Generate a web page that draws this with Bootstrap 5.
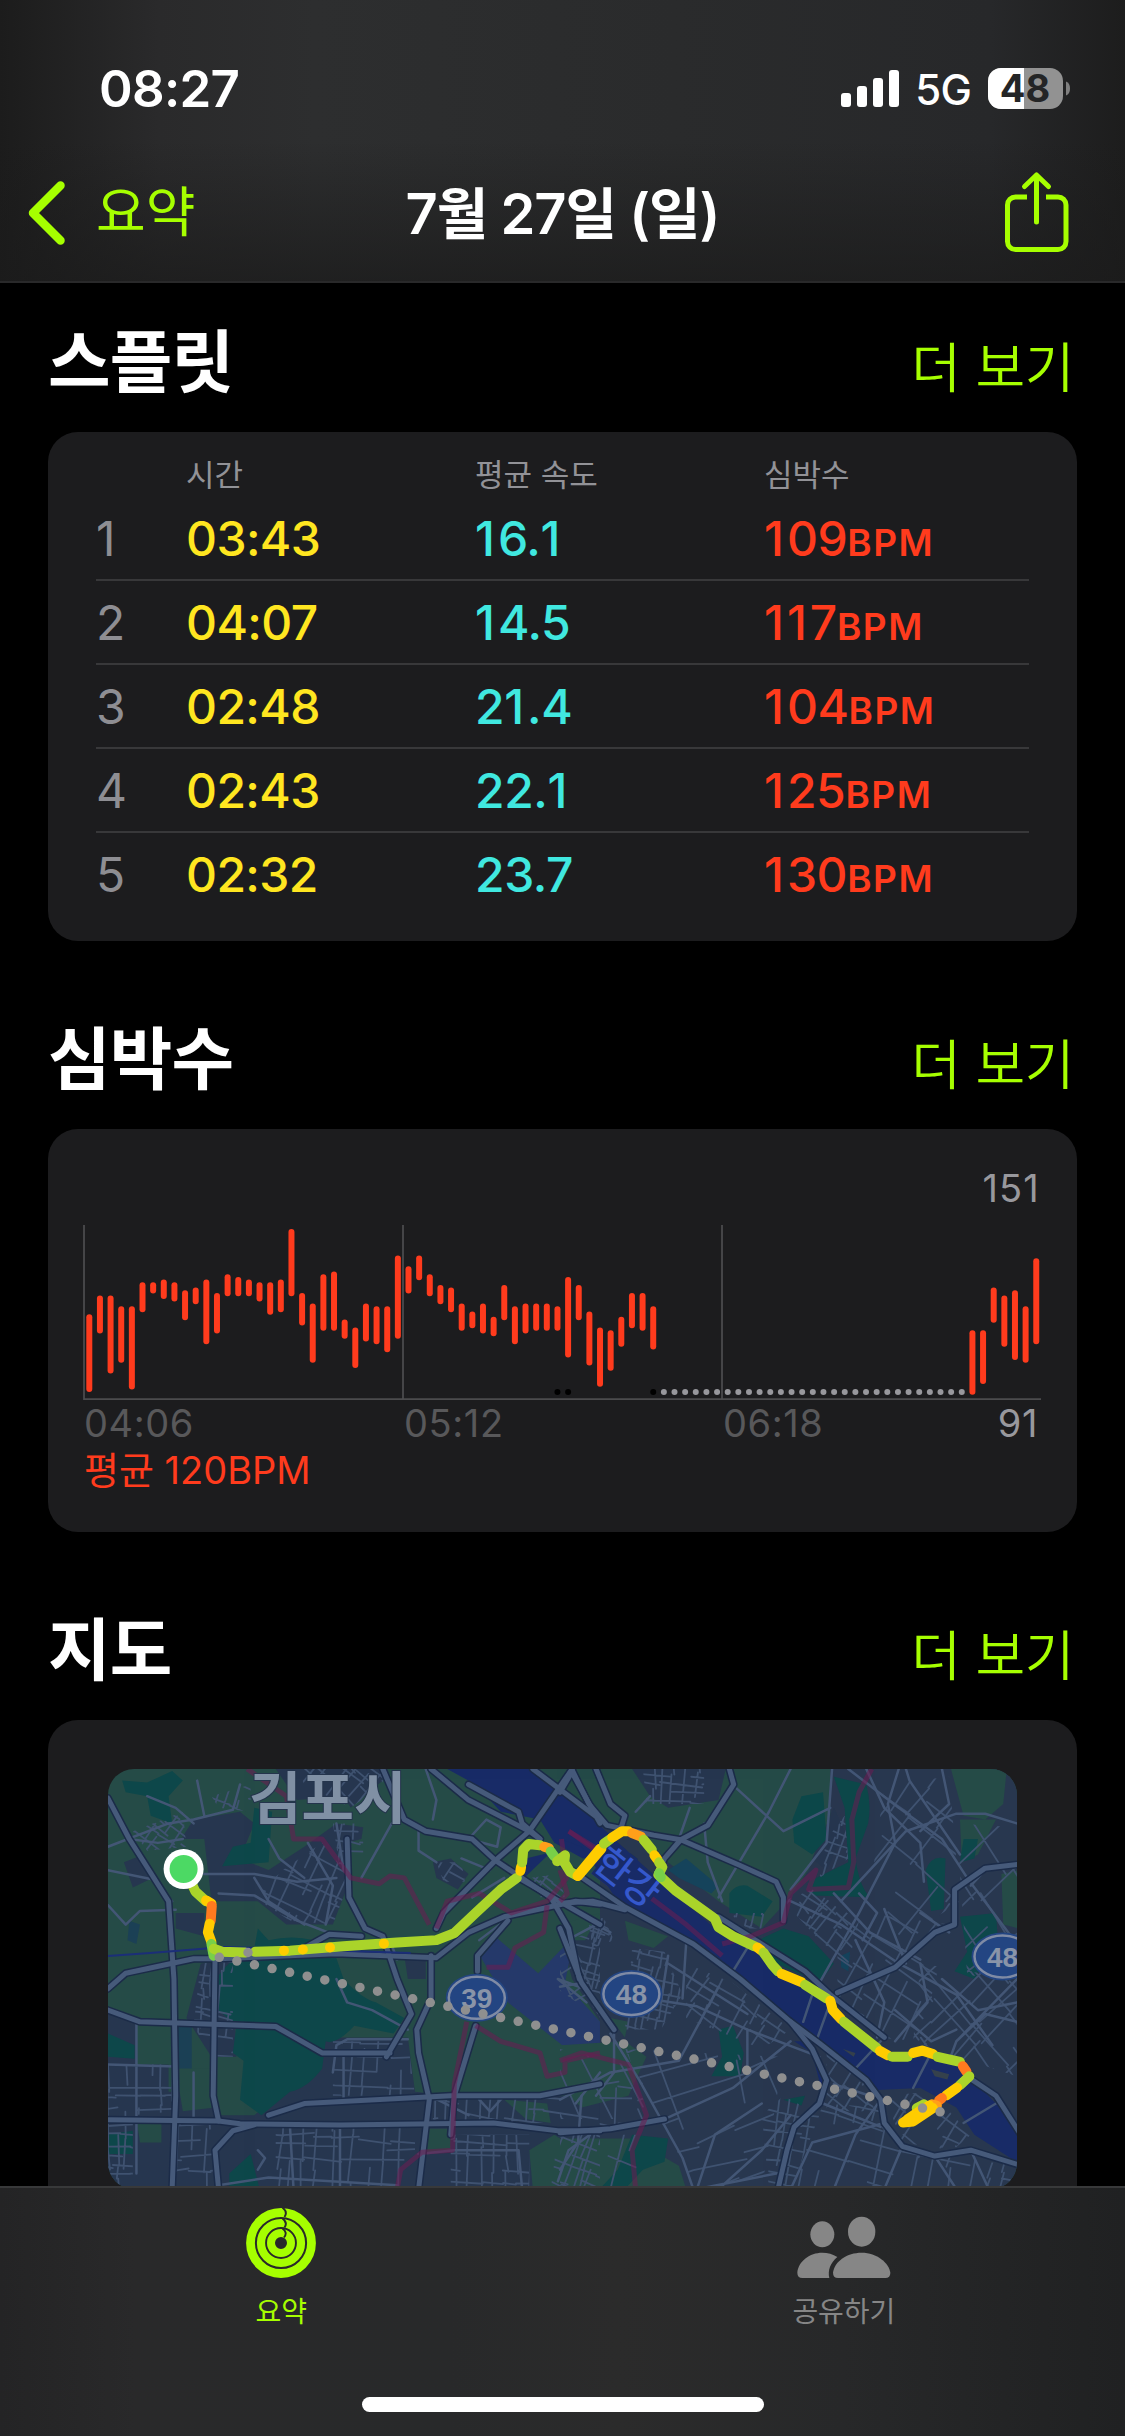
<!DOCTYPE html>
<html lang="ko">
<head>
  <meta charset="UTF-8">
  <title>7월 27일 (일)</title>
  <link href="https://cdn.jsdelivr.net/npm/bootstrap@5.3.0/dist/css/bootstrap.min.css" rel="stylesheet">

  <style>
    body {
      width: 1125px;
      height: 2436px;
      overflow: hidden;
      background: #000;
      color: #fff;
      font-family: Inter, "Noto Sans CJK KR", sans-serif;
    }

    .top-bar {
      height: 283px;
      padding-top: 59px;
      border-bottom: 2px solid #29292a;
      background:
        linear-gradient(180deg, transparent 50%, rgba(27, 27, 27, .75) 100%),
        linear-gradient(90deg, #1c1c1c 0, #2a2a2b 14%, #2d2e2f 28%, #2a2b2c 60%, #27282a 88%, #1d1d1d 100%);
    }
    .status-row { height: 60px; padding: 0 54px 0 99px; }
    .clock { font-size: 51px; font-weight: 600; letter-spacing: -.7px; line-height: 60px; }
    .network { font-size: 42px; font-weight: 500; line-height: 60px; margin: 0 17px 0 16px; letter-spacing: -.8px; padding-top: 2px; }
    .nav-row { height: 140px; margin-top: 24px; padding: 0 54px 0 26px; }
    .nav-side { width: 300px; }
    .nav-side.back { width: 328px; }
    .nav-row a, .more-link { color: #a6ff00; text-decoration: none; }
    .back-label { font-size: 54px; line-height: 70px; margin-left: 28px; font-weight: 400; }
    .page-title { font-size: 56px; font-weight: 600; line-height: 80px; letter-spacing: -1px; padding-top: 2px; }

    main { height: 1903px; overflow: hidden; padding: 0 48px; }
    .section-head { height: 188px; padding-bottom: 30px; }
    .section-head.first { height: 149px; }
    .section-head h2 { font-size: 68px; font-weight: 700; line-height: 80px; letter-spacing: -.8px; }
    .more-link { font-size: 54px; font-weight: 350; line-height: 60px; margin: 0 3px 3px 0; letter-spacing: -.4px; }
    .panel { background: #1c1c1e; border-radius: 30px; }

    .splits { height: 509px; padding: 0 48px; }
    .split-row { display: grid; grid-template-columns: 90px 289px 289px 1fr; }
    .split-labels { height: 65px; padding-top: 21px; font-size: 31px; line-height: 44px; color: #929297; font-weight: 400; }
    .split-item { height: 84px; line-height: 84px; font-size: 48px; font-weight: 500; letter-spacing: -.4px; border-bottom: 2px solid #38383a; }
    .split-item:last-child { border-bottom: 0; }
    .split-no { color: #8e8e93; font-weight: 400; }
    .split-time { color: #ffe620; letter-spacing: -.6px; }
    .split-speed { color: #40e8e0; }
    .one-digit { letter-spacing: 3px; }
    .bpm-text { color: #ff3b1d; }
    .bpm-unit { font-size: 37px; font-weight: 600; letter-spacing: 1.5px; }

    .pulse { height: 403px; padding: 36px 36px 0; font-size: 38px; }
    .pulse svg { overflow: visible; }
    .pulse-max { line-height: 46px; color: #98989d; padding-right: 1px; letter-spacing: 1.2px; }
    .pulse-axis { display: grid; grid-template-columns: 320px 319px 1fr auto; line-height: 44px; color: #58585a; padding-right: 3px; letter-spacing: .6px; }
    .pulse-low { color: #98989d; }
    .pulse-avg { line-height: 50px; }

    .map-panel { padding: 49px 60px 40px; border-radius: 30px 30px 0 0; }
    .route-map { width: 909px; height: 420px; border-radius: 26px; overflow: hidden; }
    .route-map path { vector-effect: non-scaling-stroke; fill: none; stroke-linejoin: round; stroke-linecap: round; }
    .route-map .area path { stroke: none; }
    .route-map .casing path { stroke: #1b2b48; stroke-width: 8; }
    .route-map .road path { stroke: #465a7a; stroke-width: 5; }
    .route-map .block path { stroke: #3f5270; stroke-width: 1.8; }
    .route-map .street path { stroke: #435675; stroke-width: 2.5; }
    .route-map .border-line path { stroke: #6b1d52; stroke-width: 5; opacity: .55; stroke-linecap: butt; }
    .route-map .track path { stroke-width: 10; }

    .tab-bar {
      height: 250px;
      border-top: 2px solid #38393a;
      background: linear-gradient(90deg, #242425 0, #29292a 12%, #28292a 40%, #2b2b2b 55%, #272829 75%, #202122 100%);
    }
    .tab-item { width: 50%; padding-top: 20px; font-size: 28px; line-height: 36px; letter-spacing: -.1px; color: #868686; }
    .tab-item.active { color: #a6ff00; }
    .tab-item svg { margin-bottom: 16px; }
    .home-indicator { width: 402px; height: 15px; border-radius: 8px; background: #fff; margin: 67px auto 0; }
  </style>
</head>
<body>

  <header class="top-bar">
    <div class="status-row d-flex align-items-center">
      <span class="clock me-auto">08:27</span>
      <svg width="58" height="60" viewBox="0 0 58 60" fill="#fff">
        <rect x="0" y="34" width="10" height="14" rx="3"/>
        <rect x="16" y="27" width="10" height="21" rx="3"/>
        <rect x="32" y="19" width="10" height="29" rx="3"/>
        <rect x="48" y="11" width="10" height="37" rx="3"/>
      </svg>
      <span class="network">5G</span>
      <svg width="83" height="60" viewBox="0 0 83 60">
        <rect x="0" y="9" width="75" height="41" rx="13" fill="#929292"/>
        <path d="M13 9H36V50H13A13 13 0 0 1 0 37V22A13 13 0 0 1 13 9Z" fill="#fff"/>
        <path d="M78 22.5Q82 24 82 29.5T78 36.500Z" fill="#808080"/>
        <text x="37" y="43" text-anchor="middle" font-size="38" font-weight="700" fill="#242526">48</text>
      </svg>
    </div>
    <nav class="nav-row d-flex align-items-center justify-content-between">
      <a href="#" class="nav-side back d-flex align-items-center">
        <svg width="42" height="70" viewBox="0 0 42 70" fill="none" stroke="#a6ff00" stroke-width="8.500" stroke-linecap="round" stroke-linejoin="round">
          <path d="M34.500 7.500L7 35L34.500 62.500"/>
        </svg>
        <span class="back-label">요약</span>
      </a>
      <span class="page-title text-nowrap">7월 27일 (일)</span>
      <a href="#" class="nav-side d-flex justify-content-end">
        <svg width="69" height="84" viewBox="0 0 69 84" fill="none" stroke="#a6ff00" stroke-width="5" stroke-linecap="round" stroke-linejoin="round">
          <path d="M25 26H13.500a8 8 0 0 0-8 8V70.500a8 8 0 0 0 8 8H56a8 8 0 0 0 8-8V34a8 8 0 0 0-8-8H44" stroke-linecap="butt"/>
          <path d="M34.500 51V4M22.500 15.500L34.500 4L46.500 15.500"/>
        </svg>
      </a>
    </nav>
  </header>

  <main>
    <!-- Splits -->
    <div class="section-head first d-flex justify-content-between align-items-end">
      <h2 class="m-0">스플릿</h2>
      <a href="#" class="more-link">더 보기</a>
    </div>
    <section class="panel splits">
      <div class="split-row split-labels">
        <span></span><span>시간</span><span>평균 속도</span><span>심박수</span>
      </div>
      <div id="split-list"></div>
    </section>

    <!-- Heart rate -->
    <div class="section-head d-flex justify-content-between align-items-end">
      <h2 class="m-0">심박수</h2>
      <a href="#" class="more-link">더 보기</a>
    </div>
    <section class="panel pulse">
      <div class="pulse-max text-end">151</div>
      <svg id="pulse-chart" class="d-block" width="957" height="190" viewBox="0 0 957 190">
        <path d="M0 14V189M319 14V189M638 14V189M-.8 188.200H957" stroke="#4b4b4d" stroke-width="1.800" fill="none"/>
      </svg>
      <div class="pulse-axis">
        <span>04:06</span><span>05:12</span><span>06:18</span><span class="pulse-low">91</span>
      </div>
      <div class="pulse-avg bpm-text">평균 120BPM</div>
    </section>

    <!-- Map -->
    <div class="section-head d-flex justify-content-between align-items-end">
      <h2 class="m-0">지도</h2>
      <a href="#" class="more-link">더 보기</a>
    </div>
    <section class="panel map-panel">
      <svg id="route-map" class="route-map d-block" viewBox="108 1769 909 420">
        <rect x="108" y="1769" width="909" height="420" fill="#254b47"/>
        <rect x="600" y="1769" width="417" height="420" fill="#28374f"/>
      </svg>
    </section>
  </main>

  <footer class="tab-bar">
    <div class="d-flex">
      <div class="tab-item active d-flex flex-column align-items-center">
        <svg width="70" height="70" viewBox="-35 -35 70 70" fill="none" stroke="#a6ff00">
          <circle r="30.500" stroke-width="8.800"/>
          <circle r="20" stroke-width="8.200"/>
          <circle r="10" stroke-width="8"/>
          <path d="M1.500 -35.500Q7 -31 3.500 -26M1.500 -24.500Q7 -20.500 3.500 -15.500M1.500 -14.500Q7 -10.500 3 -5.500" stroke="#29292a" stroke-width="1.900"/>
        </svg>
        <span>요약</span>
      </div>
      <div class="tab-item d-flex flex-column align-items-center">
        <svg width="94" height="70" viewBox="80 25 282 210" fill="#868686">
          <ellipse cx="156" cy="104" rx="36" ry="39"/>
          <ellipse cx="274" cy="96" rx="41" ry="45"/>
          <path d="M203 235Q188 235 188 219C192 185 230 159 274 159C320 159 356 190 360 219Q360 235 345 235Z"/>
          <path d="M96 235Q81 235 81 219C84 185 118 159 156 159C172 159 188 163 201 172C180 190 172 212 177 235Z"/>
        </svg>
        <span>공유하기</span>
      </div>
    </div>
    <div class="home-indicator"></div>
  </footer>

  <script>
    // Splits table
    const splits = [
      ['03:43', '16.1', 109],
      ['04:07', '14.5', 117],
      ['02:48', '21.4', 104],
      ['02:43', '22.1', 125],
      ['02:32', '23.7', 130]
    ];
    // Inter sets its 1 tight, so it gets a little more room
    const widenOnes = n => String(n).replace(/1/g, '<span class="one-digit">1</span>');
    document.getElementById('split-list').innerHTML = splits.map((s, i) => `
      <div class="split-row split-item">
        <span class="split-no">${i + 1}</span>
        <span class="split-time">${s[0]}</span>
        <span class="split-speed">${widenOnes(s[1])}</span>
        <span class="bpm-text">${widenOnes(s[2])}<span class="bpm-unit">BPM</span></span>
      </div>`).join('');

    // Heart rate ranges [high, low], one slot each
    const ranges = [
      [119,92],[126,114],[126,99],[122,103],[122,93],[131,122],[131,129],[132,127],[131,126],[128,119],
      [129,125],[132,110],[127,114],[134,128],[133,128],[132,128],[131,126],[131,121],[132,122],[151,128],
      [127,117],[123,103],[134,115],[135,115],[117,112],[114,101],[123,111],[122,110],[122,107],[141,112],
      [137,129],[141,134],[134,128],[130,125],[129,122],[123,115],[120,116],[123,114],[118,113],[130,119],
      [122,110],[123,114],[123,115],[123,115],[122,115],[133,105],[130,119],[120,102],[114,94],[113,100],
      [118,109],[127,116],[127,115],[122,108]
    ];
    const tail = [[113,91],[113,95],[129,118],[126,109],[128,104],[122,103],[140,110]];
    const slotX = i => 5.3 + 10.64 * i;
    const bpmY = b => 18 + (151 - b) * 2.662;
    const bar = (r, i) => `<rect x="${slotX(i) - 3}" y="${bpmY(r[0])}" width="6" height="${bpmY(r[1]) - bpmY(r[0]) + 6}" rx="3" fill="#ff3b1d"/>`;
    const dot = (i, color) => `<circle cx="${slotX(i)}" cy="181" r="3" fill="${color}"/>`;
    let chart = ranges.map(bar).join('') + tail.map((r, i) => bar(r, i + 83)).join('');
    [44, 45, 53].forEach(i => { chart += dot(i, '#000'); });
    for (let i = 54; i < 83; i++) chart += dot(i, '#98989d');
    document.getElementById('pulse-chart').innerHTML += chart;

    // Map: west and east tiles have their own grids
    const west = 'translate(40 1590) scale(.35714 .38903)';
    const east = 'translate(560 1590) scale(.36033 .38903)';
    const urban = '#26364f', green = '#254b47', forest = '#0d474a', water = '#182b67';

    const areas = {
      west: [
        [urban, 'M395 640L430 590L560 570L600 600L560 690L640 720L740 660L830 600L905 610L900 640L860 650L870 740L820 860L690 860L610 800L480 800L460 640Z'],
        [urban, 'M660 460H960V490L870 560L850 530L720 540Z'],
        [urban, 'M235 700L290 680L315 740L260 765ZM380 830H460V890L380 870ZM190 1075L270 1110V1230H190Z'],
        [urban, 'M190 1220H360V1290H490L500 1350H600L740 1240L800 1150H1030L1050 1290L1155 1300H1568V1540H190Z'],
        [urban, 'M1460 900L1568 860V1110L1490 1000ZM1100 700L1150 690L1200 730L1170 770L1110 740ZM450 960L540 950L550 1200H480L410 1100ZM1020 940H1080V1000H1030Z'],
        [forest, 'M230 490L300 495L370 465L400 490L360 530L370 600L310 580L300 530L240 520ZM600 560L650 570L640 700L510 710L540 660L590 650Z'],
        [forest, 'M500 990Q540 940 600 920L610 870L640 900Q740 880 820 920L850 1000Q900 1050 940 1060L1020 1100L990 1140L880 1120Q830 1170 800 1160L790 1230Q750 1280 700 1290L620 1350L560 1310L570 1210L540 1190L550 1120L500 1080Z'],
        [forest, 'M530 1500L590 1450L615 1540H530ZM190 1140L265 1170V1205L190 1200ZM190 1400L260 1390V1450H190Z'],
        [green, 'M380 1230H490V1330L400 1340ZM1370 1440L1440 1400L1490 1430L1450 1540H1380ZM1070 1385H1150V1440L1080 1450ZM270 1360H340V1420H280ZM1300 1310L1420 1320L1430 1370L1360 1360Z'],
        ['#25396a', 'M1280 895L1395 985L1495 890L1470 1010L1568 1110V1170L1490 1190L1310 1060L1235 945Z'],
        ['#1b4055', 'M385 1120H425V1230H390ZM250 850L280 860L270 910L245 900Z'],
        [water, 'M1130 455H1380L1470 520L1568 580V680L1520 690L1440 650L1400 590L1290 570L1220 500ZM1360 690L1430 675L1350 745Z']
      ],
      east: [
        [green, 'M110 460H750V580L690 720L620 810L560 870L440 800L300 700L250 650L130 600L60 560ZM1085 460H1240L1230 550L1180 590L1120 580ZM1110 590H1210L1160 680L1115 700Z'],
        [green, 'M0 860L110 830L70 900H0ZM180 850L300 890L260 920L190 900ZM1225 730L1275 720V870L1230 860ZM0 1170L180 1160L240 1200L190 1300L60 1330L0 1280ZM0 1410H200L330 1480L350 1540H0ZM140 1100L190 1110L180 1150Z'],
        [urban, 'M200 460H460L440 540L300 560L250 530ZM700 690L760 560L790 620L740 720Z'],
        [forest, 'M645 590L670 530L730 520L740 640L700 680L650 650ZM760 480L850 500Q865 550 855 600L820 690Q830 760 860 790L700 785L690 750L800 700L790 560ZM470 780Q490 755 520 760L590 800L560 840L470 830ZM550 900L620 870L690 890L760 960L720 1010L600 960Z'],
        [forest, 'M1015 720Q1030 680 1070 690L1065 820L1030 825ZM1120 640H1160L1150 690L1110 700ZM1110 840L1210 830L1215 900L1150 1000L1095 980L1130 930ZM440 1130L480 1120L510 1190L500 1250L420 1250L450 1200ZM200 1400L300 1410L290 1470L230 1490L180 1540H110L160 1490ZM620 1310L680 1300L670 1325Z'],
        ['#15435b', 'M300 720L350 690L440 760L420 780L330 740ZM780 940L805 930L800 980L780 970Z'],
        [water, 'M0 515L60 560L150 640L270 740L430 870L560 940L620 990L750 1060L900 1200L1000 1200L1110 1225L1145 1260L1275 1380V1475L1150 1400L1100 1330L1000 1280L880 1285L720 1170L600 1090L480 975L330 890L170 815L90 700L60 660L0 640ZM650 1160L690 1160L735 1240L730 1300L700 1190Z'],
        ['#35414c', 'M1030 1232L1080 1245L1075 1258L1040 1250ZM785 1180L820 1190L815 1200Z']
      ]
    };

    const roads = {
      west: [
        'M190 535L250 640L360 800L375 1000L380 1300L370 1540', 'M190 1025L240 985L430 948H500L830 935L1110 945L1200 880L1300 840L1500 800L1568 808',
        'M960 460L1020 590L1080 620L1210 640L1275 695L1430 790L1480 870L1510 1000', 'M1110 870L1130 830L1275 695L1370 620L1490 460',
        'M1095 460L1200 540L1370 620L1400 640', 'M1200 500L1340 570L1350 600L1400 640', 'M1380 460L1568 590M1490 470L1568 600',
        'M190 1080L280 1110L660 1122L790 1190H980', 'M1095 940V1050L1055 1130L1060 1190L1090 1310L1060 1540',
        'M190 1362L500 1365L560 1372L840 1375L1270 1370L1450 1390H1568', 'M490 950L485 1300L500 1365M500 1540L490 1440L540 1390L600 1375',
        'M860 640L865 790L910 870L960 890L1000 1000L1040 1090L970 1200', 'M1220 1120L1160 1300L1150 1400',
        'M640 1350L740 1320L1150 1300H1400L1568 1270', 'M1225 980V940L1310 850M740 920L810 885L900 890', 'M1340 740L1568 860'
      ],
      east: [
        'M0 520L35 465L80 550L130 605L260 630L335 642L500 708L600 750L620 790V850', 'M100 460L140 550L180 580L170 610',
        'M470 460L482 500L410 605L335 642L290 690L270 730', 'M0 700L180 815L370 910L500 1000L640 1110L720 1165L850 1260L890 1310L900 1370L950 1430L1040 1455L1140 1440L1275 1478',
        'M0 805L90 800L180 822', 'M440 840L560 910L680 980L750 1040L900 1150', 'M640 1110L700 1180L740 1260L720 1320L650 1380L630 1440L605 1540',
        'M1275 705L1180 715L1095 770V860L1040 880L930 970L770 1035', 'M0 1395L140 1385L290 1360', 'M1145 1260L1210 1300L1275 1395', 'M0 870L60 1010L150 1130'
      ]
    };

    const streets = {
      west: [
        'M190 660L360 600L430 590L540 565L560 500M250 640L330 650L400 640M440 490L460 580M190 720L320 745L370 800M190 810L240 860L280 825L380 822',
        'M460 730H600L720 750L830 740M500 780L600 785L720 850L820 885M750 650L820 760L800 860M600 740L640 800L740 860M830 600L850 720M640 640L670 690L740 740',
        'M830 1000L860 1060L930 1080L1030 1130M985 600L900 740M1060 620L1060 670L1110 700M1200 640L1250 590L1290 610L1280 660L1200 640',
        'M850 1190V1310M820 1240L830 1170L860 1155H1030M1450 1000L1530 1060M1450 1000L1540 1030M1330 830L1230 900M1000 950L980 900',
        'M1230 1310L1260 1340L1300 1300M1450 1520L1480 1440L1540 1400M610 1440L630 1460L610 1490M840 1380V1540M700 1380L710 1540M1090 1300L1200 1350',
        'M1060 1450L1160 1440H1340L1350 1540M500 1530L640 1510L1000 1530M190 1220L380 1225M270 1110V1500M430 1240V1360M1568 1240L1500 1320',
        'M1080 460L1110 540L1100 590M1180 690L1260 720M1210 790L1300 740M300 530L380 560L430 600'
      ],
      east: [
        'M640 460L580 570L440 790M490 510L620 620L750 560M755 460L740 650L640 770M800 460L940 560L1060 640L1130 740L1268 910M960 460L970 490L1110 680M940 460L910 550L930 650L830 830L720 1010',
        'M1268 600L1180 575L1100 575L960 620L780 800M1060 460L1080 550L1000 620M850 460L900 560L1000 650L1010 750M640 800L780 860L940 960L1100 1040L1200 1170M1060 1000L1160 1080L1268 1060',
        'M820 900L900 1060L880 1150M760 780L860 880L1000 950M900 820L960 960M1000 830L1080 880M1180 720L1140 760M830 780L880 830L840 900',
        'M1268 1110L1180 1090L1100 1160L1080 1210M1268 1000L1100 1160M930 1080L1030 1160L1100 1130M1000 960L1020 1060L930 1160',
        'M140 1140L220 1260L340 1460L370 1540M0 1310L140 1240L330 1210L440 1020M150 1130V1240L100 1300M240 1050L380 1070L520 1130L720 1200M300 960L520 1090M520 1130V1240',
        'M0 1490L50 1420L60 1300M290 1360L480 1280L640 1160M380 1540L430 1400L560 1320M440 1540L560 1440L640 1350M380 1540L600 1500M890 1310L820 1400L760 1540M900 1370L700 1420L640 1540M950 1430L900 1540M1040 1455L1100 1540M1140 1440L1190 1540',
        'M730 1320L890 1380M760 1270L860 1300M480 980L520 920M675 1110L700 1040M715 1150L750 1060M820 1230L890 1160M980 1280L1030 1190M1120 1370L1210 1320',
        'M400 600L410 700L450 800M250 530L210 570M360 560L330 640M20 900L100 860L140 880M60 1010L0 1020M280 1060L300 940M350 910L340 1050'
      ]
    };

    // Dense neighbourhood grids: [outline, angle, spacing]
    const blocks = {
      west: [
        ['M680 720L790 650L870 740L820 860L700 850L600 790Z', 24, 30], ['M260 620L400 570L410 660L300 670Z', 35, 24],
        ['M820 600H905V680L840 720Z', 5, 26], ['M190 1220H380V1340L260 1350V1530H190Z', 0, 30], ['M820 1160H1030L1050 1300H820Z', 3, 30],
        ['M380 1370H490V1540H380Z', 0, 32], ['M660 1380H1050V1540H660Z', 3, 38], ['M1100 1300H1568V1370H1100Z', 6, 36],
        ['M1150 1400H1370V1540H1150Z', 2, 32], ['M450 960L540 950V1200H480L430 1120Z', 8, 26], ['M1480 900L1568 870V1100L1500 1000Z', 15, 26],
        ['M720 460H960V500L870 560L740 500Z', 40, 36], ['M1110 700L1180 700L1190 750L1130 750ZM1370 740L1450 730L1470 790H1400Z', 35, 24],
        ['M480 530L590 500L590 570L500 560Z', 20, 28], ['M1450 1400H1568V1540H1430Z', 20, 30]
      ],
      east: [
        ['M230 460H400V550H240Z', 3, 28], ['M80 860L120 840L150 900L90 920Z', 20, 22], ['M200 920L290 930L340 1040L280 1130L180 1130Z', 12, 24],
        ['M350 960L480 1010L640 1130L560 1180L350 1100Z', 32, 34], ['M620 800L700 770L830 850L800 960L720 900Z', 37, 28],
        ['M740 640L790 580L800 690L720 740Z', 20, 26], ['M470 830L580 830L590 870L520 870Z', 15, 24],
        ['M770 820L1080 860L1000 1160L880 1150L770 1060Z', 30, 54], ['M1000 960L1268 1000V1250L1100 1200L980 1160Z', 48, 48],
        ['M900 500L1080 480L1110 800L950 900L860 780Z', 38, 68], ['M180 1180L620 1200L560 1540H380L220 1260Z', -18, 64],
        ['M620 1300L720 1350L640 1540H580L560 1350Z', 10, 40], ['M730 1320L890 1330L950 1440L1268 1480V1540H640L700 1400Z', 14, 44],
        ['M740 1190L870 1290V1340H740Z', 35, 34], ['M900 1300L1030 1290L1140 1400L1090 1440L950 1420Z', 35, 34],
        ['M0 1180L180 1220L260 1360H0Z', -25, 66], ['M1100 600L1268 610V1000L1130 990Z', 52, 88], ['M0 900L60 930L110 1100L0 1030Z', 60, 42],
        ['M0 1400H230L200 1540H0Z', 18, 60], ['M110 1220H200V1380H110Z', 5, 46]
      ]
    };

    let seed = 7;
    const rand = () => (seed = (seed * 16807) % 2147483647) / 2147483647;
    function blockLines([outline, angle, gap], id) {
      const pts = outline.match(/[MLHV][^MLHVZ]*/g).map(p => p.slice(1).trim().split(' ').map(Number)).filter(p => p.length === 2);
      const cx = pts.reduce((a, p) => a + p[0], 0) / pts.length;
      const cy = pts.reduce((a, p) => a + p[1], 0) / pts.length;
      let d = '';
      for (let v = -350; v < 350; v += gap * (.6 + rand() * .8)) {
        for (let u = -350; u < 350;) {
          const len = gap * (1 + rand() * 4);
          const bend = (rand() - .5) * gap * .6;
          if (rand() > .25) d += `M${u.toFixed()} ${v.toFixed()}L${(u + len).toFixed()} ${(v + bend).toFixed()}`;
          if (rand() > .25) d += `M${v.toFixed()} ${u.toFixed()}L${(v + bend).toFixed()} ${(u + len).toFixed()}`;
          u += len;
        }
      }
      return `<clipPath id="${id}"><path d="${outline}"/></clipPath><g clip-path="url(#${id})"><path transform="translate(${cx} ${cy}) rotate(${angle})" d="${d}"/></g>`;
    }

    const borders = {
      west: 'M580 460L690 530L710 640L790 640L870 740L950 755L980 735L1020 740L1090 860M1110 870L1140 800L1230 780L1320 830L1420 800L1475 740L1460 640M1420 810L1410 880L1330 920L1310 970L1250 970M1195 1110L1160 1270L1155 1440L1070 1445L1010 1490L1000 1540M1220 1120L1290 1160L1400 1190L1420 1250L1470 1240V1210L1568 1190M1480 620L1568 670',
      east: 'M865 460L830 520L810 590L815 700L800 765L690 770L710 720L640 780L620 855L530 890L450 910M25 620L130 690M250 790L350 860L450 940M0 1210L60 1190L190 1220L240 1350L200 1440L210 1540M0 720L20 780L0 800'
    };

    // Route pieces coloured by pace
    const lime = '#aad42a', yellow = '#ffcc00', orange = '#ff9f1a', red = '#ff7a1f';
    const track = {
      west: [
        [lime, 'M425 755L435 775L465 800'], [yellow, 'M465 798L480 806'], [red, 'M481 812L478 850'], [yellow, 'M475 858L470 880L480 905'],
        ['#78d048', 'M480 910L486 940'], [lime, 'M486 922L510 930L575 932'], [lime, 'M602 930L700 927L850 916L1000 906L1110 900L1160 882L1220 830L1290 770L1335 740'],
        [yellow, 'M683 927H683.1M736 924H736.1M812 919H812.1M963 909H963.1M1345 722L1347 712'], [lime, 'M1350 700L1353 668L1368 653L1400 656'],
        [orange, 'M1412 660L1425 664'], ['#78d048', 'M1430 672L1440 685'], [lime, 'M1448 697L1470 682L1468 700L1485 725L1500 732'], [yellow, 'M1505 735L1568 665']
      ],
      east: [
        [yellow, 'M50 735L115 665'], [lime, 'M122 652L140 640'], [yellow, 'M145 636L172 620L190 620'], [orange, 'M200 625L225 634'],
        [lime, 'M232 642L255 668'], [yellow, 'M262 682L270 692'], [lime, 'M275 700L284 712L273 732L320 772L430 845L440 867L480 890L540 916'],
        ['#78d048', 'M275 728L280 738'], [yellow, 'M548 919L558 926'], [lime, 'M565 932L590 965L605 980'], [yellow, 'M615 987L670 1008'],
        [lime, 'M680 1015L740 1050'], [yellow, 'M750 1056L757 1080L780 1103'], [lime, 'M788 1110L880 1178'], [yellow, 'M888 1185L910 1196'],
        [lime, 'M922 1200L965 1200'], [yellow, 'M980 1190L1005 1184L1035 1193'], [lime, 'M1048 1200L1110 1213'], [red, 'M1118 1224L1128 1238'],
        [lime, 'M1136 1250L1110 1273'], [yellow, 'M1102 1279L1072 1299'], [red, 'M1060 1306L1052 1312'], [orange, 'M1046 1326L1032 1322'],
        [lime, 'M1010 1322L990 1332'], [yellow, 'M1025 1325L952 1369L980 1366L1035 1332L965 1360L1000 1338']
      ]
    };

    const layer = (cls, side, inner) => `<g class="${cls}" transform="${side === 'west' ? west : east}">${inner}</g>`;
    const shield = (x, y, n) => `
      <ellipse cx="${x}" cy="${y}" rx="31" ry="24" fill="#234582"/>
      <ellipse cx="${x}" cy="${y}" rx="28" ry="21" fill="#234582" stroke="#7f8ba5" stroke-width="2.500"/>
      <text x="${x}" y="${y + 10}" text-anchor="middle" font-family="Liberation Sans, sans-serif" font-size="28" font-weight="700" fill="#8994a8">${n}</text>`;

    let map = '';
    ['west', 'east'].forEach(s => { map += layer('area', s, areas[s].map(a => `<path d="${a[1]}" style="fill:${a[0]}"/>`).join('')); });
    ['west', 'east'].forEach(s => { map += layer('block', s, blocks[s].map((b, i) => blockLines(b, s + i)).join('')); });
    ['west', 'east'].forEach(s => { map += layer('street', s, streets[s].map(d => `<path d="${d}"/>`).join('')); });
    ['casing', 'road'].forEach(c => ['west', 'east'].forEach(s => { map += layer(c, s, roads[s].map(d => `<path d="${d}"/>`).join('')); }));
    ['west', 'east'].forEach(s => { map += layer('border-line', s, `<path d="${borders[s]}"/>`); });
    map += '<path d="M108 1956L150 1953L225 1947L410 1953" stroke="#1b2e78" stroke-width="2"/>';
    map += '<text x="249" y="1819" font-size="57" font-weight="700" fill="#8090a4" stroke="#24344c" stroke-width="2" paint-order="stroke">김포시</text>';
    map += '<text transform="translate(627 1878) rotate(38)" y="13" text-anchor="middle" font-size="38" font-weight="500" fill="#3558cc" stroke="#182b67" stroke-width="6" paint-order="stroke">한강</text>';
    map += shield(476.8, 1997.800, 39) + shield(631.4, 1993.900, 48) + shield(1002.5, 1956.500, 48);
    ['west', 'east'].forEach(s => { map += layer('track', s, track[s].map(t => `<path d="${t[1]}" stroke="${t[0]}"/>`).join('')); });
    map += '<path d="M219.300 1957.300L940.500 2111.900" stroke="#8f8f8f" stroke-width="9.500" stroke-dasharray="0 17.980"/><circle cx="248" cy="1952.500" r="4.700" fill="#8f8f8f"/>';
    map += '<circle cx="183.600" cy="1869" r="20" fill="#fff"/><circle cx="183.600" cy="1869" r="14" fill="#4cd964"/>';
    document.getElementById('route-map').innerHTML += map;
  </script>
  <script src="https://cdn.jsdelivr.net/npm/bootstrap@5.3.0/dist/js/bootstrap.bundle.min.js"></script>
</body>
</html>
